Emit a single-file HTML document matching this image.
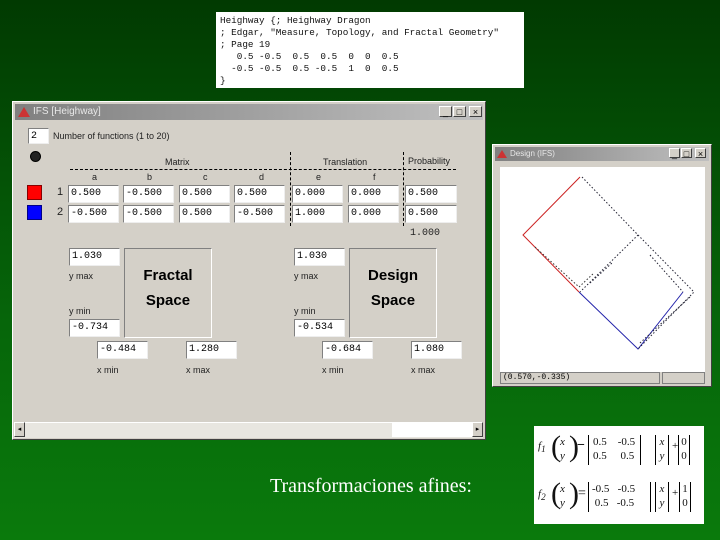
<!DOCTYPE html><html><head><style>
body{margin:0;width:720px;height:540px;overflow:hidden;position:relative;background:linear-gradient(#013a01,#06660a 60%,#0a7a0c);font-family:"Liberation Sans",sans-serif}
.a{position:absolute;white-space:nowrap}
.win{background:#d4d0c8;border:1px solid #fff;border-right-color:#404040;border-bottom-color:#404040;box-sizing:border-box}
.tb{position:absolute;background:linear-gradient(90deg,#808080,#c0c0c0);color:#e8e8e8;font-size:10px;line-height:16px}
.btn{position:absolute;top:2px;width:13px;height:11px;background:#d4d0c8;border:1px solid #fff;border-right-color:#404040;border-bottom-color:#404040;font-size:9px;line-height:10px;text-align:center;color:#000;box-sizing:border-box}
.f{position:absolute;background:#fff;border:1px solid #808080;border-right-color:#eee;border-bottom-color:#eee;height:18px;box-sizing:border-box;font-family:"Liberation Mono",monospace;font-size:10px;line-height:16px;padding-left:2px;width:51px}
.l{position:absolute;font-size:9px;color:#222;white-space:nowrap}
.box{position:absolute;border:1px solid #808080;border-right-color:#fff;border-bottom-color:#fff;font-weight:bold;font-size:15px;text-align:center;line-height:25px;box-sizing:border-box;padding-top:14px}
.m{position:absolute;border-left:1px solid #000;border-right:1px solid #000;line-height:14px;box-sizing:border-box;white-space:pre;height:30px}
</style></head><body>
<div class="a" style="left:216px;top:12px;width:308px;height:76px;background:#fff;font-family:'Liberation Mono',monospace;font-size:9.3px;line-height:12px;padding:3px 4px;box-sizing:border-box;white-space:pre;color:#111">Heighway {; Heighway Dragon
; Edgar, "Measure, Topology, and Fractal Geometry"
; Page 19
   0.5 -0.5  0.5  0.5  0  0  0.5
  -0.5 -0.5  0.5 -0.5  1  0  0.5
}</div>

<div class="a win" style="left:12px;top:101px;width:474px;height:339px">
<div class="tb" style="left:2px;top:2px;width:468px;height:16px;padding-left:18px;box-sizing:border-box">IFS [Heighway]
<div class="a" style="left:3px;top:3px;width:0;height:0;border-left:6px solid transparent;border-right:6px solid transparent;border-bottom:10px solid #c33"></div>
<div class="btn" style="left:424px">_</div><div class="btn" style="left:438px">□</div><div class="btn" style="left:454px">×</div></div>
</div>
<div class="f" style="left:28px;top:128px;width:21px;height:16px">2</div>
<div class="l" style="left:53px;top:131px">Number of functions (1 to 20)</div>
<div class="a" style="left:30px;top:151px;width:9px;height:9px;border-radius:50%;background:#222;border:1px solid #000"></div>
<div class="l" style="left:165px;top:157px">Matrix</div>
<div class="l" style="left:323px;top:157px">Translation</div>
<div class="l" style="left:408px;top:156px">Probability</div>
<div class="a" style="left:70px;top:169px;width:386px;border-top:1px dashed #000"></div>
<div class="a" style="left:290px;top:152px;height:74px;border-left:1px dashed #000"></div>
<div class="a" style="left:403px;top:152px;height:74px;border-left:1px dashed #000"></div>
<div class="l" style="left:92px;top:172px">a</div><div class="l" style="left:147px;top:172px">b</div><div class="l" style="left:203px;top:172px">c</div><div class="l" style="left:259px;top:172px">d</div><div class="l" style="left:316px;top:172px">e</div><div class="l" style="left:373px;top:172px">f</div>
<div class="a" style="left:27px;top:185px;width:13px;height:13px;background:#f00;border:1px solid #800"></div>
<div class="a" style="left:27px;top:205px;width:13px;height:13px;background:#00f;border:1px solid #008"></div>
<div class="l" style="left:57px;top:186px;font-size:11px">1</div><div class="l" style="left:57px;top:206px;font-size:11px">2</div>
<div class="f" style="left:68px;top:185px">0.500</div><div class="f" style="left:123px;top:185px">-0.500</div><div class="f" style="left:179px;top:185px">0.500</div><div class="f" style="left:234px;top:185px">0.500</div><div class="f" style="left:292px;top:185px">0.000</div><div class="f" style="left:348px;top:185px">0.000</div><div class="f" style="left:405px;top:185px;width:52px">0.500</div>
<div class="f" style="left:68px;top:205px">-0.500</div><div class="f" style="left:123px;top:205px">-0.500</div><div class="f" style="left:179px;top:205px">0.500</div><div class="f" style="left:234px;top:205px">-0.500</div><div class="f" style="left:292px;top:205px">1.000</div><div class="f" style="left:348px;top:205px">0.000</div><div class="f" style="left:405px;top:205px;width:52px">0.500</div>
<div class="l" style="left:410px;top:228px;font-family:'Liberation Mono',monospace;font-size:10px">1.000</div>

<div class="f" style="left:69px;top:248px">1.030</div>
<div class="l" style="left:69px;top:271px">y max</div><div class="l" style="left:69px;top:306px">y min</div>
<div class="f" style="left:69px;top:319px">-0.734</div>
<div class="box" style="left:124px;top:248px;width:88px;height:90px">Fractal<br>Space</div>
<div class="f" style="left:97px;top:341px">-0.484</div><div class="f" style="left:186px;top:341px">1.280</div>
<div class="l" style="left:97px;top:365px">x min</div><div class="l" style="left:186px;top:365px">x max</div>
<div class="f" style="left:294px;top:248px">1.030</div>
<div class="l" style="left:294px;top:271px">y max</div><div class="l" style="left:294px;top:306px">y min</div>
<div class="f" style="left:294px;top:319px">-0.534</div>
<div class="box" style="left:349px;top:248px;width:88px;height:90px">Design<br>Space</div>
<div class="f" style="left:322px;top:341px">-0.684</div><div class="f" style="left:411px;top:341px">1.080</div>
<div class="l" style="left:322px;top:365px">x min</div><div class="l" style="left:411px;top:365px">x max</div>
<div class="a" style="left:14px;top:422px;width:469px;height:15px;background:#e8e6e0;border-top:1px solid #fff"></div>
<div class="a win" style="left:14px;top:422px;width:11px;height:15px;font-size:7px;line-height:13px;text-align:center">◂</div>
<div class="a" style="left:392px;top:422px;width:80px;height:15px;background:#fff"></div>
<div class="a win" style="left:472px;top:422px;width:11px;height:15px;font-size:7px;line-height:13px;text-align:center">▸</div>

<div class="a win" style="left:492px;top:144px;width:220px;height:243px">
<div class="tb" style="left:2px;top:2px;width:214px;height:14px;padding-left:15px;box-sizing:border-box;font-size:8px;line-height:14px">Design (IFS)
<div class="a" style="left:2px;top:3px;width:0;height:0;border-left:5px solid transparent;border-right:5px solid transparent;border-bottom:8px solid #c33"></div>
<div class="btn" style="left:174px;top:1px;width:11px;height:10px">_</div><div class="btn" style="left:186px;top:1px;width:11px;height:10px">□</div><div class="btn" style="left:200px;top:1px;width:11px;height:10px">×</div></div>
</div>
<svg class="a" style="left:500px;top:167px" width="205" height="205"><rect width="205" height="205" fill="#fff"/>
<g fill="none" stroke-width="1">
<path d="M80 10 L23 68 L79 125" stroke="#c22"/>
<path d="M79 125 L138 182 L183 125" stroke="#22a"/>
<path d="M35 80 L79 120 L94 106" stroke="#333" stroke-dasharray="1.5 2"/>
<path d="M82 10 L138 68 L80 125 M138 68 L194 125 L138 182 M150 88 L183 125" stroke="#223" stroke-dasharray="1.5 2"/>
<path d="M90 116 L112 96 M140 176 L190 130" stroke="#223" stroke-dasharray="1.5 2"/>
</g></svg>
<div class="a" style="left:500px;top:372px;width:160px;height:12px;border:1px solid #808080;box-sizing:border-box;font-size:8px;line-height:10px;padding-left:2px;font-family:'Liberation Mono',monospace">(0.570,-0.335)</div>
<div class="a" style="left:662px;top:372px;width:43px;height:12px;border:1px solid #808080;box-sizing:border-box"></div>

<div class="a" style="left:270px;top:475px;font-family:'Liberation Serif',serif;font-size:20px;color:#fff">Transformaciones afines:</div>
<div class="a" style="left:534px;top:426px;width:170px;height:98px;background:#fff;font-family:'Liberation Serif',serif;font-size:11px;color:#111">
<div class="a" style="left:4px;top:14px;font-style:italic">f<sub>1</sub></div>
<div class="a" style="left:17px;top:6px;font-size:30px;line-height:30px">(</div><div class="a" style="left:26px;top:9px;font-style:italic;line-height:14px">x<br>y</div><div class="a" style="left:35px;top:6px;font-size:30px;line-height:30px">)</div>
<div class="a" style="left:43px;top:12px;font-size:14px;font-weight:bold">−</div>
<div class="m" style="left:54px;top:9px;width:53px;padding-left:4px">0.5    -0.5
0.5     0.5</div>
<div class="m" style="left:121px;top:9px;width:14px;text-align:center;font-style:italic">x
y</div>
<div class="a" style="left:138px;top:14px">+</div>
<div class="m" style="left:144px;top:9px;width:12px;text-align:center">0
0</div>
<div class="a" style="left:4px;top:62px;font-style:italic">f<sub>2</sub></div>
<div class="a" style="left:17px;top:53px;font-size:30px;line-height:30px">(</div><div class="a" style="left:26px;top:56px;font-style:italic;line-height:14px">x<br>y</div><div class="a" style="left:35px;top:53px;font-size:30px;line-height:30px">)</div>
<div class="a" style="left:44px;top:60px;font-size:14px">=</div>
<div class="m" style="left:54px;top:56px;width:63px;padding-left:3px">-0.5   -0.5
 0.5   -0.5</div>
<div class="m" style="left:121px;top:56px;width:14px;text-align:center;font-style:italic">x
y</div>
<div class="a" style="left:138px;top:61px">+</div>
<div class="m" style="left:145px;top:56px;width:12px;text-align:center">1
0</div>
</div>
</body></html>
